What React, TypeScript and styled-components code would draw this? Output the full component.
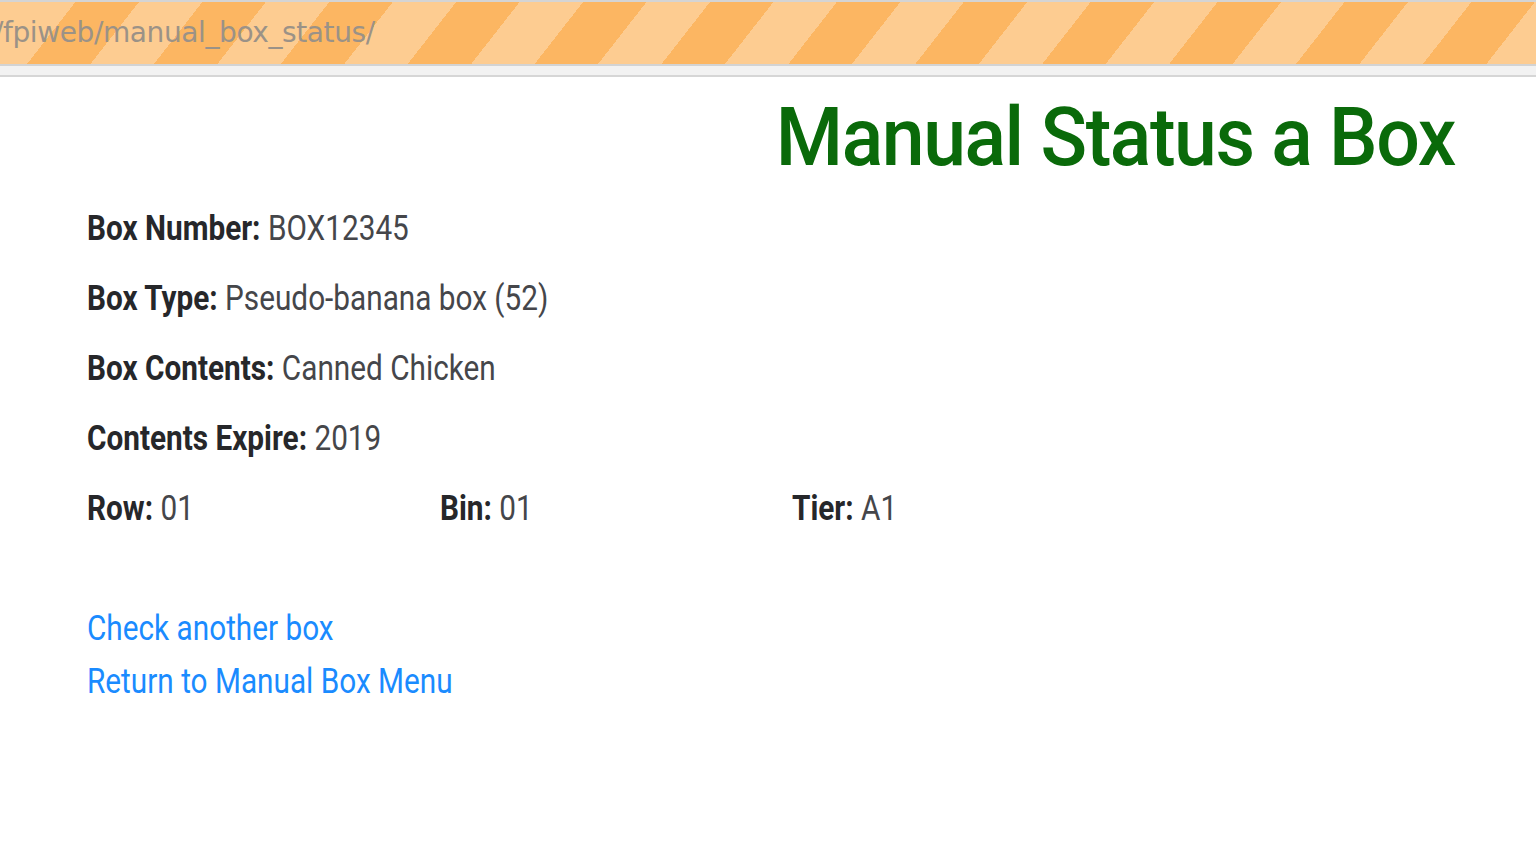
import styled, { createGlobalStyle } from 'styled-components'

const GlobalStyle = createGlobalStyle`
  html, body {
    margin: 0;
    padding: 0;
    background: #ffffff;
  }
  body {
    font-family: Roboto, "Liberation Sans", sans-serif;
  }
`

const fields = [
  { label: 'Box Number:', value: 'BOX12345' },
  { label: 'Box Type:', value: 'Pseudo-banana box (52)' },
  { label: 'Box Contents:', value: 'Canned Chicken' },
  { label: 'Contents Expire:', value: '2019' },
]

const location = [
  { label: 'Row:', value: '01' },
  { label: 'Bin:', value: '01' },
  { label: 'Tier:', value: 'A1' },
]

function App(): JSX.Element {
  return (
    <>
      <GlobalStyle />
      <Chrome>
        <UrlBar>
          <UrlText>/fpiweb/manual_box_status/</UrlText>
        </UrlBar>
        <Strip />
      </Chrome>
      <Main>
        <Title>Manual Status a Box</Title>
        <Details>
          {fields.map((f) => (
            <Field key={f.label}>
              <Label>{f.label}</Label> <Value>{f.value}</Value>
            </Field>
          ))}
          <LocationRow>
            {location.map((f) => (
              <Field key={f.label} as="div">
                <Label>{f.label}</Label> <Value>{f.value}</Value>
              </Field>
            ))}
          </LocationRow>
        </Details>
        <Links>
          <StyledLink href="#">Check another box</StyledLink>
          <StyledLink href="#">Return to Manual Box Menu</StyledLink>
        </Links>
      </Main>
    </>
  )
}

// the page text is a narrow face: regular Roboto squeezed horizontally
const condensed = `
  transform: scaleX(0.85);
  transform-origin: left center;
`

const Chrome = styled.header`
  border-top: 2px solid #d4d4d4;
`
const UrlBar = styled.div`
  height: 62px;
  display: flex;
  align-items: center;
  overflow: hidden;
  background-color: #fdcc91;
  background-image: repeating-linear-gradient(
    128deg,
    #fdcc91 0px,
    #fdcc91 50px,
    #fcb662 50px,
    #fcb662 100px
  );
  background-position: 12px 0;
`
const UrlText = styled.span`
  font-family: "DejaVu Sans", sans-serif;
  font-size: 28px;
  letter-spacing: -0.4px;
  color: #9b9287;
  margin-left: -6px;
  margin-top: -2px;
`
const Strip = styled.div`
  height: 9px;
  background: #f2f2f2;
  border-top: 2px solid #d3d3d3;
  border-bottom: 2px solid #d6d6d6;
`
const Main = styled.main`
  padding: 11px 81px 0 87px;
`
const Title = styled.h1`
  margin: 0;
  text-align: right;
  font-family: Roboto, sans-serif;
  font-weight: 500;
  font-size: 82px;
  line-height: 98px;
  color: #0a6a0a;
  letter-spacing: -1.5px;
  transform: scaleX(0.938);
  transform-origin: right center;
`
const Details = styled.section`
  margin-top: 20px;
`
const Field = styled.p`
  margin: 0 0 25px;
  font-size: 35px;
  line-height: 45px;
  white-space: nowrap;
  ${condensed}
`
const Label = styled.b`
  font-weight: 700;
  color: #26272a;
`
const Value = styled.span`
  color: #45464a;
`
const LocationRow = styled.div`
  display: grid;
  grid-template-columns: repeat(3, 352.5px);
`
const Links = styled.nav`
  display: flex;
  flex-direction: column;
  align-items: flex-start;
  margin-top: 46px;
`
const StyledLink = styled.a`
  font-size: 35px;
  line-height: 53px;
  color: #1a8bff;
  text-decoration: none;
  white-space: nowrap;
  ${condensed}
`

export default App
